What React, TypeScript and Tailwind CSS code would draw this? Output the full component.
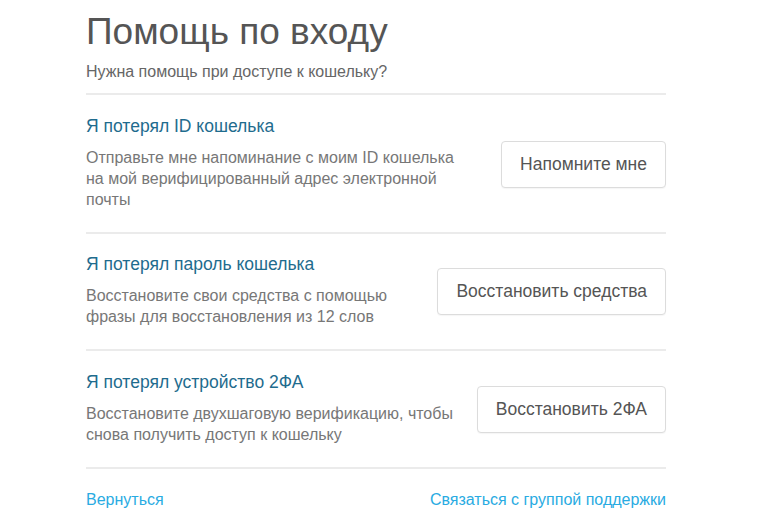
import React from "react";

const sections = [
  {
    title: "Я потерял ID кошелька",
    desc: ["Отправьте мне напоминание с моим ID кошелька", "на мой верифицированный адрес электронной", "почты"],
    button: "Напомните мне",
  },
  {
    title: "Я потерял пароль кошелька",
    desc: ["Восстановите свои средства с помощью", "фразы для восстановления из 12 слов"],
    button: "Восстановить средства",
  },
  {
    title: "Я потерял устройство 2ФА",
    desc: ["Восстановите двухшаговую верификацию, чтобы", "снова получить доступ к кошельку"],
    button: "Восстановить 2ФА",
  },
];

export default function App() {
  return (
    <div
      className="w-[775px] h-[519px] bg-white overflow-hidden"
      style={{ fontFamily: '"Liberation Sans", Arial, sans-serif' }}
    >
      <div className="ml-[86px] w-[580px] pt-[10px]">
        <h1 className="text-[37px] leading-[44px] text-[#555555]">Помощь по входу</h1>
        <p className="mt-[8px] text-[16px] leading-[20px] text-[#666666]">Нужна помощь при доступе к кошельку?</p>
        <div className="mt-[11px] h-[2px] bg-[#ebebeb]" />
        {sections.map((s, i) => (
          <div key={s.title}>
            <div
              className={
                "flex items-center justify-between pb-[22px] " + (i === 1 ? "pt-[20px]" : "pt-[21px]")
              }
            >
              <div>
                <div className="text-[17.5px] leading-[20px] text-[#1f6c8e]">{s.title}</div>
                <div className="mt-[11px] text-[16px] leading-[21px] text-[#777777]">
                  {s.desc.map((d) => (
                    <div key={d}>{d}</div>
                  ))}
                </div>
              </div>
              <button className="h-[47px] mt-[2px] px-[18px] border border-[#dcdcdc] rounded-[4px] bg-white text-[17.5px] text-[#555555] shadow-[0_1px_1px_rgba(0,0,0,0.04)]">
                {s.button}
              </button>
            </div>
            <div className="h-[2px] bg-[#ebebeb]" />
          </div>
        ))}
        <div className="flex justify-between pt-[21px] text-[16px] leading-[20px] text-[#29abe2]">
          <span>Вернуться</span>
          <span>Связаться с группой поддержки</span>
        </div>
      </div>
    </div>
  );
}
